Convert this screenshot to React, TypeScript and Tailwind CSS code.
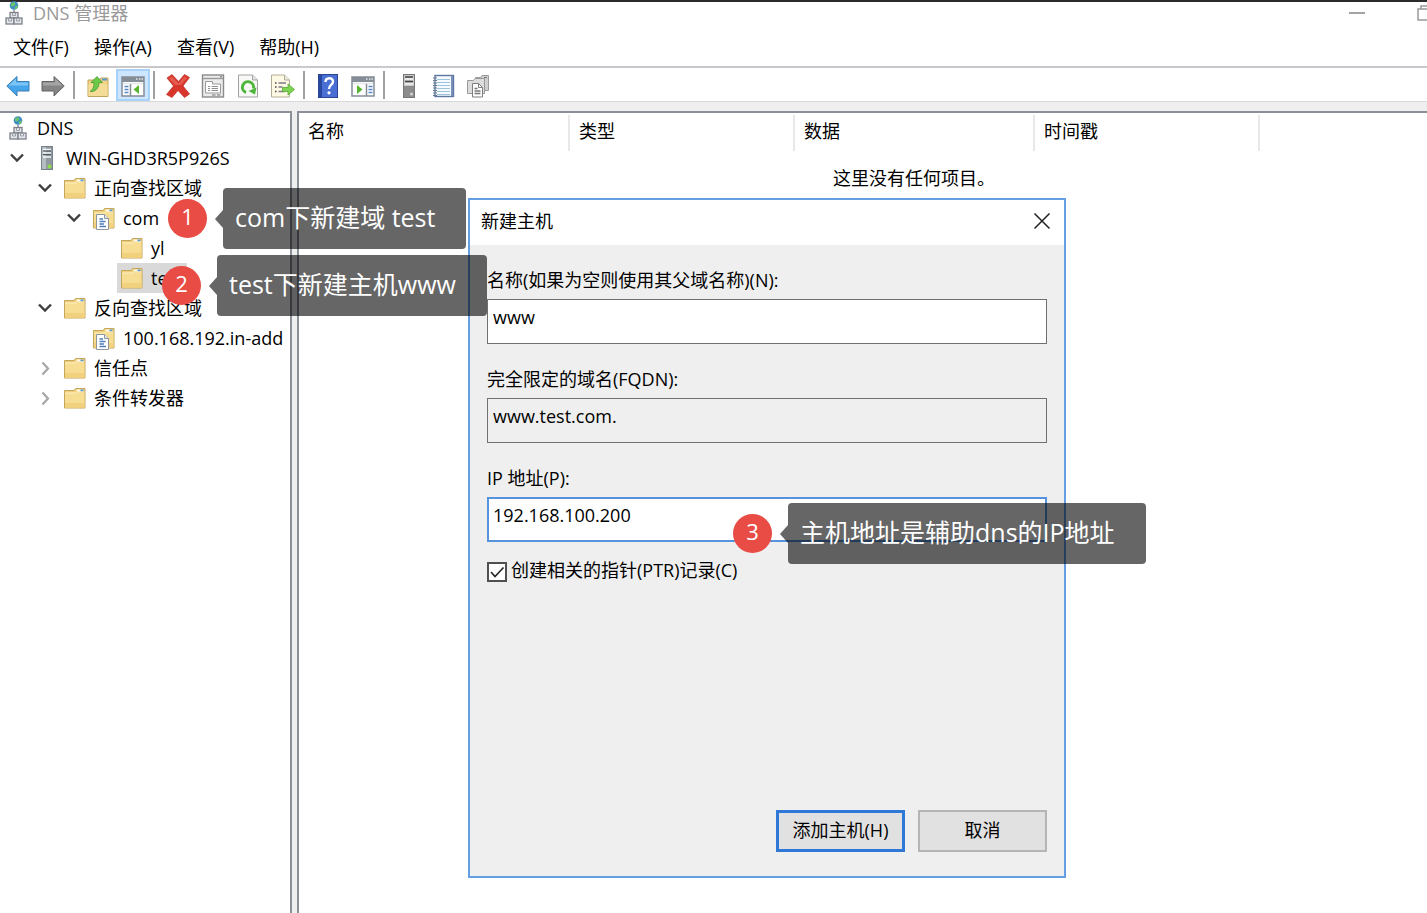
import type { ReactNode } from 'react';
import clsx from 'clsx';

type IconName = 'dns' | 'server' | 'folder' | 'zone';

interface TreeNode {
  id: string;
  label: string;
  level: number;
  icon: IconName;
  state?: 'open' | 'closed';
  selected?: boolean;
}

const TREE: TreeNode[] = [
  { id: 'root', label: 'DNS', level: 0, icon: 'dns' },
  { id: 'server', label: 'WIN-GHD3R5P926S', level: 1, icon: 'server', state: 'open' },
  { id: 'forward', label: '正向查找区域', level: 2, icon: 'folder', state: 'open' },
  { id: 'com', label: 'com', level: 3, icon: 'zone', state: 'open' },
  { id: 'yl', label: 'yl', level: 4, icon: 'folder' },
  { id: 'test', label: 'test', level: 4, icon: 'folder', selected: true },
  { id: 'reverse', label: '反向查找区域', level: 2, icon: 'folder', state: 'open' },
  { id: 'arpa', label: '100.168.192.in-add', level: 3, icon: 'zone' },
  { id: 'trust', label: '信任点', level: 2, icon: 'folder', state: 'closed' },
  { id: 'forwarder', label: '条件转发器', level: 2, icon: 'folder', state: 'closed' },
];

const INDENT = ['pl-0', 'pl-1.5', 'pl-[34px]', 'pl-[63px]', 'pl-[91px]'];

const MENUS = ['文件(F)', '操作(A)', '查看(V)', '帮助(H)'];

function Svg({ children, className = 'size-6' }: { children: ReactNode; className?: string }) {
  return (
    <svg viewBox="0 0 24 24" className={clsx('shrink-0', className)} fill="none" aria-hidden="true">
      {children}
    </svg>
  );
}

function DnsIcon({ className }: { className?: string }) {
  return (
    <Svg className={className}>
      <circle cx="12" cy="4.5" r="4.3" fill="#3f8fc4" />
      <path d="M9 2.5l3-1.5 1.5 2-2 2.5-2.5-.5zM13 5.5l3-1-1 3-2 1z" fill="#6cc46a" />
      <path d="M12 9v3" stroke="#8b8f96" strokeWidth="1.5" />
      <g fill="#e4e6ea" stroke="#7c8089" strokeWidth="1.3">
        <rect x="8" y="11.5" width="8" height="5.5" />
        <rect x="4" y="17" width="8" height="6" />
        <rect x="12" y="17" width="8" height="6" />
      </g>
      <path d="M10.5 12v2.500h3V12M6.500 17.500V20h3v-2.500M14.500 17.500V20h3v-2.500" stroke="#9a9ea6" />
    </Svg>
  );
}

function ServerIcon() {
  return (
    <Svg>
      <rect x="6.500" y=".500" width="11" height="23" fill="#8f999f" stroke="#77828a" />
      <path d="M7 1h4v22H7z" fill="#b4bdc2" />
      <path d="M8 3.500h8M8 7h8M8 11h8" stroke="#f4f6f7" strokeWidth="1.600" />
      <path d="M8 5h8M8 8.500h8" stroke="#4a5358" />
      <circle cx="14.500" cy="20.500" r="2" fill="#8be04a" />
    </Svg>
  );
}

function FolderShape() {
  return (
    <>
      <path d="M1.500 4.500H11L12.500 2.500h9.500v19.500H1.500z" fill="#f0cf7c" stroke="#c5a65a" />
      <path d="M13.500 3.500h7v2h-7z" fill="#fdf8e8" />
      <path d="M17.500 3.500h3v2h-3z" fill="#5b97cf" />
      <path d="M2 7h19.500v14.500H2z" fill="#f7dd92" />
      <path d="M2 7h11l1.500-1h7" stroke="#fff2c6" />
      <path d="M2 17h19.500v4.500H2z" fill="#f1d17d" />
    </>
  );
}

function FolderIcon() {
  return (
    <Svg>
      <FolderShape />
    </Svg>
  );
}

function ZoneIcon() {
  return (
    <Svg>
      <FolderShape />
      <path d="M4.500 8.500h8l4 4v11h-12z" fill="#fff" stroke="#8e959e" />
      <path d="M12.500 8.500v4h4" fill="#e6e9ee" stroke="#8e959e" />
      <path d="M7.500 13h3.500M7.500 15.500h6M7.500 18h4.500M7.500 20.500h6.500" stroke="#4d7dbb" strokeWidth="1.300" />
    </Svg>
  );
}

function NodeIcon({ name }: { name: IconName }) {
  if (name === 'dns') return <DnsIcon />;
  if (name === 'server') return <ServerIcon />;
  if (name === 'zone') return <ZoneIcon />;
  return <FolderIcon />;
}

function BackIcon() {
  return (
    <Svg>
      <path d="M.800 12L11 2.500V7.500h12v9.500H11v5z" fill="#46a5ea" stroke="#3b7fb5" strokeLinejoin="round" />
      <path d="M2.500 11.500L10 4.500V8.500h12v3z" fill="#7cc4f5" />
    </Svg>
  );
}

function ForwardIcon() {
  return (
    <Svg>
      <path d="M23.200 12L13 2.500V7.500H1v9.500h12v5z" fill="#858585" stroke="#636363" strokeLinejoin="round" />
      <path d="M21.500 11.500L14 4.500V8.500H2v3z" fill="#a5a5a5" />
    </Svg>
  );
}

function UpFolderIcon() {
  return (
    <Svg>
      <path d="M2 6h11l2-2h7v18.500H2z" fill="#f0d384" stroke="#c2a45c" />
      <path d="M2.500 10h19v12h-19z" fill="#f5dc96" />
      <path d="M16 5.500h5" stroke="#5b97cf" strokeWidth="2" />
      <path
        d="M4 17.500c3-1.500 4-4.500 4-9H5l6-6 5.500 6H13c0 6-4 9.500-9 9z"
        fill="#6bc949"
        stroke="#4a9a34"
        strokeWidth=".8"
        strokeLinejoin="round"
      />
    </Svg>
  );
}

function PaneLeftIcon() {
  return (
    <Svg>
      <rect x="1" y="3" width="22" height="19" fill="#fff" stroke="#858d97" strokeWidth="1.500" />
      <path d="M1 3h22v5H1z" fill="#858d97" />
      <path d="M15 5h1.500M18 5h1.500M20.500 5H22M2 9.500h20" stroke="#e3e7ec" strokeWidth="1.300" />
      <path d="M9.500 10v12" stroke="#858d97" strokeWidth="1.500" />
      <path d="M3.500 12.500h4M3.500 15.500h4M3.500 18.500h4" stroke="#5889c9" strokeWidth="1.500" />
      <path d="M18 11v9l-5.500-4.500z" fill="#57b62f" />
    </Svg>
  );
}

function PaneRightIcon() {
  return (
    <Svg>
      <rect x="1" y="3" width="22" height="19" fill="#fff" stroke="#858d97" strokeWidth="1.500" />
      <path d="M1 3h22v5H1z" fill="#858d97" />
      <path d="M15 5h1.500M18 5h1.500M20.500 5H22M2 9.500h20" stroke="#e3e7ec" strokeWidth="1.300" />
      <path d="M15.500 10v12" stroke="#858d97" strokeWidth="1.500" />
      <path d="M17.500 12.500h4M17.500 15.500h4M17.500 18.500h4" stroke="#5889c9" strokeWidth="1.500" />
      <path d="M6 11v9l5.500-4.500z" fill="#57b62f" />
    </Svg>
  );
}

function DeleteIcon() {
  return (
    <Svg>
      <path
        d="M1 4l5-3.500 6.500 7L18.500.5l5 3L17 12l6.500 8-5 3.500-6.500-7-6 7-5.500-3L7.500 12z"
        fill="#d8362a"
        stroke="#c23a31"
        strokeWidth=".8"
        strokeLinejoin="round"
      />
      <path d="M3 4.500l3-2 6.500 7 6-7 2.500 1.500-6 7H9z" fill="#e55a4e" />
    </Svg>
  );
}

function PropertiesIcon() {
  return (
    <Svg>
      <rect x="1.500" y="1" width="21" height="22" fill="#ececec" stroke="#8a8a8a" strokeWidth="1.400" />
      <path d="M2 4.500h20" stroke="#9b9b9b" strokeWidth="1.400" />
      <path d="M19 2.800h2" stroke="#666" />
      <path d="M4.500 19V7.500h7v2.500h8v9z" fill="#fff" stroke="#999" />
      <path d="M7 12.500h2M10.500 12.500H17M7 14.500h2M10.500 14.500H17M7 16.500h2M10.500 16.500H17" stroke="#8f8f8f" />
      <path d="M11 21h3.500M16 21h3.500" stroke="#999" strokeWidth="1.500" />
    </Svg>
  );
}

function RefreshIcon() {
  return (
    <Svg>
      <path d="M2.500 1h14l5 5v17h-19z" fill="#f8f8f6" stroke="#a3a3a3" />
      <path d="M16.500 1v5h5" fill="#e2e2e2" stroke="#a3a3a3" />
      <path d="M10 18.500a5.600 5.600 0 1 1 7.500-4" stroke="#4eb53b" strokeWidth="3" />
      <path d="M20.500 13.500l-1.500 7-6.500-3.500z" fill="#4eb53b" />
    </Svg>
  );
}

function ExportIcon() {
  return (
    <Svg>
      <path d="M.5 1h13l5 5v17H.5z" fill="#fdf9e4" stroke="#b3ad98" />
      <path d="M13.500 1v5h5" fill="#ececdf" stroke="#b3ad98" />
      <path d="M4 9h1.500M4 13h1.500M4 17.500h1.500" stroke="#444" strokeWidth="1.500" />
      <path d="M7.500 9H15M7.500 13h4M7.500 17.500h6" stroke="#7e7a86" strokeWidth="1.500" />
      <path d="M11.500 13.500H17V10l6.500 5.500L17 21v-3.500h-5.500z" fill="#7ed352" stroke="#55aa37" strokeWidth=".8" />
    </Svg>
  );
}

function HelpIcon() {
  return (
    <Svg>
      <rect x="2.500" y=".5" width="19" height="23" fill="#4a6fd4" stroke="#2c4590" />
      <path d="M3 1h3v22H3z" fill="#2a479f" />
      <path d="M9.500 8c0-5 7.500-5 7.500-.5 0 3.500-4 3.500-4 7.500" stroke="#fff" strokeWidth="2.400" />
      <circle cx="13" cy="18.800" r="1.600" fill="#fff" />
    </Svg>
  );
}

function GreyServerIcon() {
  return (
    <Svg>
      <rect x="7.500" y=".5" width="11" height="23" fill="#8c8c8c" stroke="#777" />
      <path d="M8 1h10v11H8z" fill="#c9c9c9" />
      <path d="M9 3h8M9 7.500h8" stroke="#444" strokeWidth="1.400" />
      <path d="M9 5h8M9 10h8" stroke="#f5f5f5" strokeWidth="1.400" />
      <circle cx="15.500" cy="20" r="1.500" fill="#d5d5d5" />
    </Svg>
  );
}

function NotebookIcon() {
  return (
    <Svg>
      <rect x="4" y="1.500" width="18.500" height="21" fill="#f7fbff" stroke="#5e76a0" strokeWidth="1.400" />
      <path d="M20 2h2v20h-2z" fill="#7890bb" />
      <path d="M6 5.500h13M6 8.500h13M6 11.500h13M6 14.500h13M6 17.500h13M6 20.500h13" stroke="#9cc4dd" />
      <path
        d="M2 4h4M2 6.500h4M2 9h4M2 11.500h4M2 14h4M2 16.500h4M2 19h4M2 21.500h4"
        stroke="#6b7c91"
        strokeWidth="1.200"
      />
    </Svg>
  );
}

function GreyZoneIcon() {
  return (
    <Svg>
      <path d="M9.500 3.500h5L16 1.500h6.500v15h-13z" fill="#cfcfcf" stroke="#9a9a9a" />
      <path d="M1.500 6.500h6L9 4.500h9.500v15h-17z" fill="#dcdcdc" stroke="#9a9a9a" />
      <path d="M18 3.500h3" stroke="#777" />
      <path d="M6.500 9.500h6l4 4v9.500h-10z" fill="#fff" stroke="#7f7f7f" />
      <path d="M12.500 9.500v4h4" stroke="#7f7f7f" />
      <path d="M8.500 14.500h3M8.500 17h6M8.500 19.500h6" stroke="#777" strokeWidth="1.300" />
    </Svg>
  );
}

function Chevron({ state }: { state?: 'open' | 'closed' }) {
  return (
    <span className="flex w-[22px] shrink-0 justify-center">
      {state && (
        <svg viewBox="0 0 16 16" className="size-4" fill="none" aria-hidden="true">
          {state === 'open' ? (
            <path d="M2 4.500l6 6 6-6" stroke="#404040" strokeWidth="2.400" />
          ) : (
            <path d="M5.500 2.500l5.500 6-5.500 6" stroke="#a6a6a6" strokeWidth="2.200" />
          )}
        </svg>
      )}
    </span>
  );
}

const TOOLBAR = [
  [
    { label: '后退', icon: <BackIcon /> },
    { label: '前进', icon: <ForwardIcon /> },
  ],
  [
    { label: '上移一级', icon: <UpFolderIcon /> },
    { label: '显示/隐藏控制台树', icon: <PaneLeftIcon />, active: true },
  ],
  [
    { label: '删除', icon: <DeleteIcon /> },
    { label: '属性', icon: <PropertiesIcon /> },
    { label: '刷新', icon: <RefreshIcon /> },
    { label: '导出列表', icon: <ExportIcon /> },
  ],
  [
    { label: '帮助', icon: <HelpIcon /> },
    { label: '显示/隐藏操作窗格', icon: <PaneRightIcon /> },
  ],
  [
    { label: '新建服务器', icon: <GreyServerIcon /> },
    { label: '筛选器', icon: <NotebookIcon /> },
    { label: '新建区域', icon: <GreyZoneIcon /> },
  ],
];

function Toolbar() {
  return (
    <div className="flex h-[34px] items-end border-b border-[#d9d9d9] pl-px">
      {TOOLBAR.map((group, i) => (
        <div key={i} className="flex items-center">
          {i > 0 && <span className="mr-1.5 ml-[3px] h-7 w-0.5 bg-[#a0a0a0]" />}
          <div className="flex gap-px">
            {group.map((item) => (
              <button
                key={item.label}
                type="button"
                aria-label={item.label}
                className={clsx(
                  'flex h-8 w-[34px] items-center justify-center border-2 pt-0.5',
                  'active' in item ? 'border-[#a9d2fa] bg-[#cce6ff]' : 'border-transparent',
                )}
              >
                {item.icon}
              </button>
            ))}
          </div>
        </div>
      ))}
    </div>
  );
}

function Tree() {
  return (
    <ul className="w-[292px] shrink-0 overflow-hidden border-t-2 border-r-2 border-[#8b8f97] bg-white">
      {TREE.map((node) => (
        <li key={node.id} className={clsx('flex h-[30px] items-center whitespace-nowrap', INDENT[node.level])}>
          {node.level > 0 && <Chevron state={node.state} />}
          <span
            className={clsx(
              'flex h-[30px] items-center gap-[7px] pr-1 pl-[3px]',
              node.level > 0 ? 'ml-1' : 'ml-[3px]',
              node.selected && 'bg-[#d9d9d9]',
            )}
          >
            <NodeIcon name={node.icon} />
            {node.label}
          </span>
        </li>
      ))}
    </ul>
  );
}

function RecordList() {
  const divider = 'h-9 border-r-2 border-[#e8e8e8] pb-1 pl-[9px] text-left font-normal';
  return (
    <div className="min-w-0 flex-1 border-t-2 border-l-2 border-[#8b8f97] bg-white pt-0.5">
      <table className="w-full table-fixed border-separate border-spacing-0">
        <thead>
          <tr>
            <th className={clsx(divider, 'w-[271px]')}>名称</th>
            <th className={clsx(divider, 'w-[225px]')}>类型</th>
            <th className={clsx(divider, 'w-[240px]')}>数据</th>
            <th className={clsx(divider, 'w-[225px]')}>时间戳</th>
            <td />
          </tr>
        </thead>
        <tbody>
          <tr>
            <td colSpan={5} className="h-14 pb-0.5 pl-[534px]">
              这里没有任何项目。
            </td>
          </tr>
        </tbody>
      </table>
    </div>
  );
}

interface FieldProps {
  id: string;
  label: string;
  value: string;
  readOnly?: boolean;
  focused?: boolean;
}

function Field({ id, label, value, readOnly, focused }: FieldProps) {
  return (
    <div className="mt-5">
      <label htmlFor={id} className="mb-1 block h-[30px] leading-[30px]">
        {label}
      </label>
      <input
        id={id}
        type="text"
        defaultValue={value}
        readOnly={readOnly}
        className={clsx(
          'block h-[45px] w-full pb-2.5 outline-none',
          focused ? 'border-2 border-[#5593df] pl-1' : 'border border-[#707070] pl-[5px]',
          readOnly ? 'bg-[#efefef]' : 'bg-white',
        )}
      />
    </div>
  );
}

function NewHostDialog() {
  return (
    <section
      role="dialog"
      aria-labelledby="dialog-title"
      className="absolute top-[198px] left-[468px] w-[598px] border-2 border-[#639fe2] bg-[#efefef]"
    >
      <header className="flex h-[45px] items-center justify-between bg-white pr-3 pb-1 pl-[11px]">
        <h2 id="dialog-title">新建主机</h2>
        <button type="button" aria-label="关闭">
          <svg viewBox="0 0 20 20" className="size-5" stroke="#222" strokeWidth="1.500" aria-hidden="true">
            <path d="M2.500 2.500l15 15M17.500 2.500l-15 15" />
          </svg>
        </button>
      </header>
      <form className="px-[17px] pb-6">
        <Field id="host" label="名称(如果为空则使用其父域名称)(N):" value="www" />
        <Field id="fqdn" label="完全限定的域名(FQDN):" value="www.test.com." readOnly />
        <Field id="ip" label="IP 地址(P):" value="192.168.100.200" focused />
        <label className="mt-3.5 flex h-7 items-center gap-1">
          <span className="relative mt-1 flex size-5">
            <input
              type="checkbox"
              defaultChecked
              className="size-5 appearance-none border-2 border-[#505050] bg-white"
            />
            <svg
              viewBox="0 0 20 20"
              className="pointer-events-none absolute inset-0 size-5"
              fill="none"
              stroke="#222"
              strokeWidth="1.600"
              aria-hidden="true"
            >
              <path d="M4 10l4 4.500 8.500-9" />
            </svg>
          </span>
          创建相关的指针(PTR)记录(C)
        </label>
        <div className="mt-[226px] flex justify-end gap-[13px]">
          <button type="button" className="h-[42px] w-[129px] border-3 border-[#3078d7] bg-[#e1e1e1] pb-0.5">
            添加主机(H)
          </button>
          <button type="button" className="h-[42px] w-[129px] border-2 border-[#b5b5b5] bg-[#e1e1e1] pb-0.5">
            取消
          </button>
        </div>
      </form>
    </section>
  );
}

function Callout({ step, text, className }: { step: number; text: string; className: string }) {
  return (
    <div className={clsx('absolute flex items-center whitespace-nowrap text-white', className)}>
      <span className="mr-2 flex size-[39px] items-center justify-center rounded-full bg-[#e84c45] pb-1.5 text-[22px]">
        {step}
      </span>
      <svg viewBox="0 0 8 18" className="h-[18px] w-2" aria-hidden="true">
        <path d="M8 0v18L0 9z" fill="#000" fillOpacity=".6" />
      </svg>
      <p className="flex h-[61px] items-center rounded-sm bg-black/60 pr-[31px] pb-[3px] pl-3 text-[25px]">{text}</p>
    </div>
  );
}

export default function App() {
  return (
    <div className="relative flex min-h-screen flex-col overflow-hidden bg-[#efefef] font-['Open_Sans','Noto_Sans_CJK_SC',sans-serif] text-[18px] leading-6 text-black">
      <div className="border-t-2 border-[#2b2b2b] bg-white">
        <header className="flex h-[26px] items-center pb-1">
          <DnsIcon className="ml-0.5 size-6" />
          <h1 className="ml-[7px] text-[#999]">DNS 管理器</h1>
          <div className="-mr-1.5 ml-auto flex gap-[52px]">
            <button type="button" aria-label="最小化" className="flex w-4 items-center">
              <span className="h-0.5 w-full bg-[#a3a3a3]" />
            </button>
            <button type="button" aria-label="还原">
              <svg viewBox="0 0 16 16" className="size-4" fill="none" stroke="#999" strokeWidth="1.500" aria-hidden="true">
                <path d="M1 4h11v11H1zM4 4V1h11v11h-3" />
              </svg>
            </button>
          </div>
        </header>
        <nav className="flex h-10 items-center gap-[25px] border-b-2 border-[#c8c8cc] pl-[13px]">
          {MENUS.map((menu) => (
            <button key={menu} type="button">
              {menu}
            </button>
          ))}
        </nav>
        <Toolbar />
      </div>
      <main className="mt-[9px] flex flex-1 gap-[5px]">
        <Tree />
        <RecordList />
      </main>
      <NewHostDialog />
      <Callout step={1} text="com下新建域 test" className="top-[188px] left-[168px]" />
      <Callout step={2} text="test下新建主机www" className="top-[255px] left-[162px]" />
      <Callout step={3} text="主机地址是辅助dns的IP地址" className="top-[503px] left-[733px]" />
    </div>
  );
}
